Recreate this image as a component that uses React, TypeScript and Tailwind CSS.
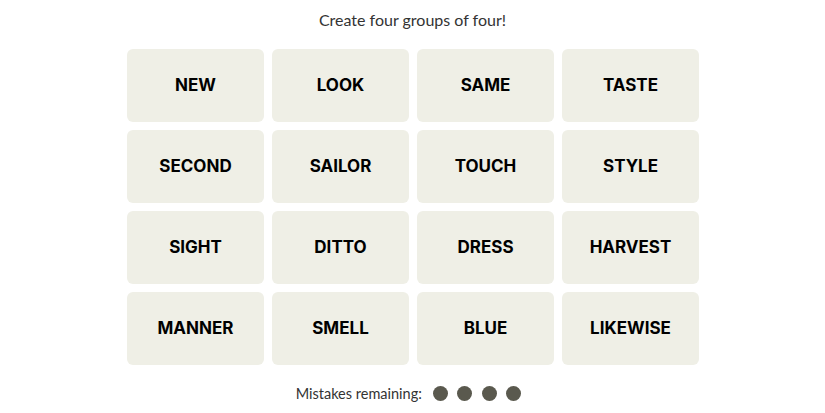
const words = [
  "NEW", "LOOK", "SAME", "TASTE",
  "SECOND", "SAILOR", "TOUCH", "STYLE",
  "SIGHT", "DITTO", "DRESS", "HARVEST",
  "MANNER", "SMELL", "BLUE", "LIKEWISE",
];

export default function App() {
  return (
    <main className="w-[825px] h-[413px] bg-white flex flex-col items-center font-['Lato',sans-serif]">
      <p className="mt-[10px] h-[20px] leading-[20px] text-[16px] text-[#333]">Create four groups of four!</p>
      <div className="mt-[19px] ml-[1px] grid grid-cols-[repeat(4,137px)] auto-rows-[73px] gap-[8px]">
        {words.map((w) => (
          <button
            key={w}
            className="rounded-[6px] bg-[#efefe6] flex items-center justify-center pt-[1px] text-[17px] font-bold text-black font-['Inter',sans-serif]"
          >
            {w}
          </button>
        ))}
      </div>
      <div className="mt-[18px] mr-[8px] flex items-center">
        <span className="text-[14.5px] text-[#333] mr-[11px]">Mistakes remaining:</span>
        <div className="flex gap-[9.5px]">
          {[0, 1, 2, 3].map((i) => (
            <span key={i} className="w-[15px] h-[15px] rounded-full bg-[#5a594e]" />
          ))}
        </div>
      </div>
    </main>
  );
}
